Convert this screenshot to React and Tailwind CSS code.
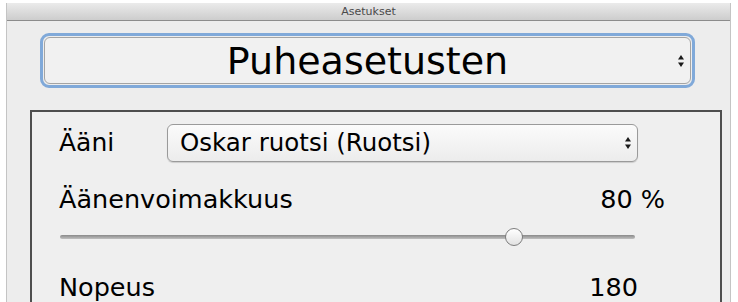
const font = { fontFamily: '"DejaVu Sans", "Lucida Grande", sans-serif' };

const Arrows = ({ className }) => (
  <svg width="8" height="14" viewBox="0 0 8 14" className={className}>
    <path d="M4 1 L7 5.5 H1 Z" fill="#1a1a1a" />
    <path d="M4 13 L7 8.5 H1 Z" fill="#1a1a1a" />
  </svg>
);

export default function App() {
  return (
    <div
      className="w-[738px] h-[302px] overflow-hidden bg-white pl-[6px] pt-[3px] text-black"
      style={font}
    >
      <div className="w-[725px] h-[299px] bg-[#ededed] border-x border-[#c4c4c4] flex flex-col">
        {/* title bar */}
        <div className="h-[18px] shrink-0 flex items-center justify-center bg-gradient-to-b from-[#ebebeb] to-[#cdcdcd] border-b border-[#8c8c8c]">
          <span className="text-[11px] leading-none text-[#4a4a4a]">Asetukset</span>
        </div>

        {/* main popup */}
        <div className="mt-[12px] ml-[33px] w-[655px] h-[55px] shrink-0 rounded-[9px] border-[3px] border-[#80a9d9] p-[1px]">
          <div className="relative w-full h-full rounded-[6px] border border-[#a4a4a4] bg-[#f1f1f1] flex items-center justify-center">
            <span className="text-[38px] leading-none">Puheasetusten</span>
            <Arrows className="absolute right-[5px] top-[16px]" />
          </div>
        </div>

        {/* group box */}
        <div className="mt-[22px] ml-[23px] w-[692px] flex-1 border-2 border-b-0 border-[#4e4e4e] bg-[#efefef] pl-[27px]">
          <div className="mt-[12px] h-[38px] flex items-center">
            <span className="w-[108px] text-[25px] leading-[28px]">Ääni</span>
            <div className="relative w-[471px] h-[38px] rounded-[6px] border border-[#9a9a9a] bg-gradient-to-b from-[#fbfbfb] to-[#ececec] shadow-[0_1px_1px_rgba(0,0,0,0.15)] flex items-center pl-[12px]">
              <span className="text-[24.5px] leading-[28px]">Oskar ruotsi (Ruotsi)</span>
              <Arrows className="absolute right-[5px] top-[11px]" />
            </div>
          </div>

          <div className="mt-[22px] w-[606px] flex justify-between text-[25.5px] leading-[30px]">
            <span>Äänenvoimakkuus</span>
            <span>80 %</span>
          </div>

          <div className="mt-[14px] w-[575px] h-[18px] ml-[1px] flex items-center relative">
            <div className="w-full h-[4px] rounded-full bg-gradient-to-b from-[#8a8a8a] to-[#c0c0c0]" />
            <div className="absolute left-[445px] top-0 w-[18px] h-[18px] rounded-full border border-[#7d7d7d] bg-gradient-to-b from-white to-[#e2e2e2]" />
          </div>

          <div className="mt-[26px] w-[579px] flex justify-between text-[25.5px] leading-[30px]">
            <span>Nopeus</span>
            <span>180</span>
          </div>
        </div>
      </div>
    </div>
  );
}
